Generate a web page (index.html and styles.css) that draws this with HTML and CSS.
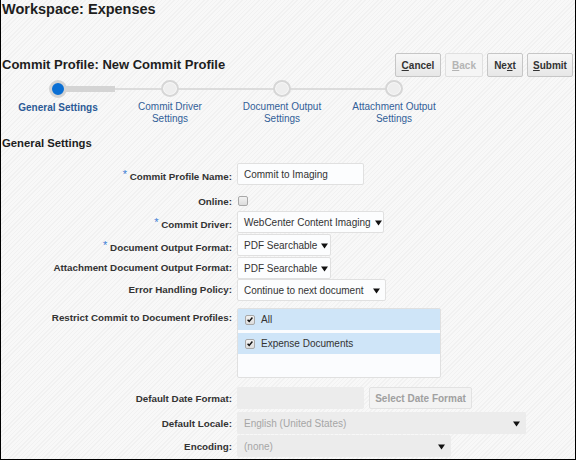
FILE: index.html
```html
<!DOCTYPE html>
<html>
<head>
<meta charset="utf-8">
<link rel="stylesheet" href="styles.css">
</head>
<body>
<div class="page">
  <h1 class="ws-title">Workspace: Expenses</h1>
  <div class="toolbar">
    <h2 class="profile-title">Commit Profile: New Commit Profile</h2>
    <div class="buttons">
      <button class="btn w-cancel"><u>C</u>ancel</button>
      <button class="btn w-back disabled"><u>B</u>ack</button>
      <button class="btn w-next">Ne<u>x</u>t</button>
      <button class="btn w-submit"><u>S</u>ubmit</button>
    </div>
  </div>

  <div class="train">
    <div class="step active"><span class="dot"></span><span class="step-label">General Settings</span></div>
    <div class="step"><span class="dot"></span><span class="step-label">Commit Driver<br>Settings</span></div>
    <div class="step"><span class="dot"></span><span class="step-label">Document Output<br>Settings</span></div>
    <div class="step"><span class="dot"></span><span class="step-label">Attachment Output<br>Settings</span></div>
  </div>

  <h3 class="section">General Settings</h3>

  <div class="form">
    <div class="row r-name">
      <div class="lbl"><span class="req">*</span> Commit Profile Name:</div>
      <div class="ctl"><div class="field w-name">Commit to Imaging</div></div>
    </div>
    <div class="row r-online">
      <div class="lbl">Online:</div>
      <div class="ctl"><span class="cb"></span></div>
    </div>
    <div class="row r-std">
      <div class="lbl"><span class="req">*</span> Commit Driver:</div>
      <div class="ctl"><div class="field select w-driver"><span class="val">WebCenter Content Imaging</span><svg class="arr" viewBox="0 0 7 7"><path d="M0 1.5h7L3.5 6.5z"/></svg></div></div>
    </div>
    <div class="row r-std">
      <div class="lbl"><span class="req">*</span> Document Output Format:</div>
      <div class="ctl"><div class="field select w-pdf"><span class="val">PDF Searchable</span><svg class="arr" viewBox="0 0 7 7"><path d="M0 1.5h7L3.5 6.5z"/></svg></div></div>
    </div>
    <div class="row r-att">
      <div class="lbl">Attachment Document Output Format:</div>
      <div class="ctl"><div class="field select w-pdf"><span class="val">PDF Searchable</span><svg class="arr" viewBox="0 0 7 7"><path d="M0 1.5h7L3.5 6.5z"/></svg></div></div>
    </div>
    <div class="row r-std">
      <div class="lbl">Error Handling Policy:</div>
      <div class="ctl"><div class="field select w-err"><span class="val">Continue to next document</span><svg class="arr" viewBox="0 0 7 7"><path d="M0 1.5h7L3.5 6.5z"/></svg></div></div>
    </div>
    <div class="row r-list">
      <div class="lbl lbl-top">Restrict Commit to Document Profiles:</div>
      <div class="ctl">
        <div class="list">
          <div class="item"><span class="cb checked"><svg viewBox="0 0 10 10"><path d="M2 5.2l2 2.3L8 2.5" fill="none" stroke="#111" stroke-width="1.8"/></svg></span>All</div>
          <div class="item"><span class="cb checked"><svg viewBox="0 0 10 10"><path d="M2 5.2l2 2.3L8 2.5" fill="none" stroke="#111" stroke-width="1.8"/></svg></span>Expense Documents</div>
        </div>
      </div>
    </div>
    <div class="row r-date">
      <div class="lbl">Default Date Format:</div>
      <div class="ctl"><div class="field dis w-name"></div><button class="btn dis-btn">Select Date Format</button></div>
    </div>
    <div class="row r-locale">
      <div class="lbl">Default Locale:</div>
      <div class="ctl"><div class="field select dis w-locale"><span class="val">English (United States)</span><svg class="arr" viewBox="0 0 7 7"><path d="M0 1.5h7L3.5 6.5z"/></svg></div></div>
    </div>
    <div class="row r-enc">
      <div class="lbl">Encoding:</div>
      <div class="ctl"><div class="field select dis w-enc"><span class="val">(none)</span><svg class="arr" viewBox="0 0 7 7"><path d="M0 1.5h7L3.5 6.5z"/></svg></div></div>
    </div>
  </div>
</div>
</body>
</html>
```

FILE: styles.css
```css
html, body {
  margin: 0;
  padding: 0;
}
body {
  width: 576px;
  height: 460px;
  box-sizing: border-box;
  border: 1px solid #000;
  border-top: 0;
  overflow: hidden;
  font-family: "Liberation Sans", Arial, sans-serif;
  color: #333;
  background-color: #f4f4f4;
  background-image: repeating-linear-gradient(135deg, #f1f1f1 0px, #f1f1f1 1px, #f8f8f8 1px, #f8f8f8 3px);
}
.page {
  position: relative;
}
.ws-title {
  margin: 0;
  padding-left: 1px;
  font-size: 14.5px;
  font-weight: bold;
  line-height: 18px;
  color: #1e1e1e;
}
.toolbar {
  display: flex;
  align-items: center;
  justify-content: space-between;
  margin-top: 35px;
  height: 24px;
  padding: 0 2px 0 1px;
}
.profile-title {
  margin: 0;
  font-size: 13px;
  font-weight: bold;
  color: #1e1e1e;
  line-height: 16px;
}
.buttons {
  display: flex;
  gap: 4px;
}
.btn {
  height: 24px;
  padding: 0;
  font-family: "Liberation Sans", Arial, sans-serif;
  font-size: 10px;
  font-weight: bold;
  color: #333;
  border: 1px solid #c6c6c6;
  border-radius: 2px;
  background: linear-gradient(#f7f7f7, #e7e7e7);
  box-sizing: border-box;
}
.w-cancel { width: 46px; }
.w-back { width: 38px; }
.w-next { width: 36px; }
.w-submit { width: 46px; }
.btn.disabled {
  color: #b4b4b4;
  background: #f5f5f5;
  border-color: #e0e0e0;
}
.train {
  position: relative;
  display: flex;
  margin-top: 3px;
  padding-left: 1px;
  height: 45px;
}
.train::before {
  content: "";
  position: absolute;
  left: 57px;
  width: 338px;
  top: 8px;
  height: 2px;
  background: #dcdcdc;
}
.train::after {
  content: "";
  position: absolute;
  left: 57px;
  width: 57px;
  top: 6px;
  height: 6px;
  background: #d4d4d4;
}
.step {
  width: 112px;
  display: flex;
  flex-direction: column;
  align-items: center;
  position: relative;
  z-index: 1;
}
.dot {
  width: 18px;
  height: 18px;
  box-sizing: border-box;
  border-radius: 50%;
  border: 2px solid #d6d6d6;
  background: #eeeeee;
  box-shadow: inset 0 0 0 1px #f8f8f8;
}
.step.active .dot {
  background: #0a6fd4;
  border: 3px solid #d4d4d4;
  box-shadow: none;
}
.step-label {
  margin-top: 4px;
  font-size: 10px;
  line-height: 12px;
  text-align: center;
  color: #325f98;
}
.step.active .step-label {
  font-weight: bold;
  color: #2b5a96;
}
.section {
  margin: 10px 0 0 0;
  padding-left: 1px;
  font-size: 11.3px;
  font-weight: bold;
  line-height: 16px;
  color: #1e1e1e;
}
.form {
  margin-top: 12px;
  display: flex;
  flex-direction: column;
}
.row {
  display: grid;
  grid-template-columns: 231px auto;
  column-gap: 5px;
  align-items: center;
}
.r-name { height: 23px; align-items: start; }
.r-name .lbl { line-height: 22px; }
.r-online { height: 25px; padding-top: 5px; box-sizing: border-box; }
.r-std { height: 23px; align-items: start; }
.r-std .lbl, .r-att .lbl { line-height: 22px; }
.r-att { height: 22px; align-items: start; }
.r-list { margin-top: 6px; align-items: start; }
.r-date { margin-top: 9px; height: 22px; }
.r-locale { margin-top: 3px; height: 22px; }
.r-enc { margin-top: 1px; height: 22px; }
.lbl {
  text-align: right;
  font-size: 9.8px;
  font-weight: bold;
  color: #333;
  white-space: nowrap;
}
.lbl-top {
  padding-top: 4px;
}
.req {
  color: #3c7ed6;
  font-weight: normal;
  font-size: 11px;
  vertical-align: 2px;
}
.ctl {
  display: flex;
  align-items: center;
  gap: 5px;
}
.field {
  height: 22px;
  box-sizing: border-box;
  border: 1px solid #e0e0e0;
  border-radius: 2px;
  background: #fcfdfe;
  font-size: 10px;
  color: #333;
  padding: 0 5px 0 6px;
  display: flex;
  align-items: center;
  white-space: nowrap;
}
.select {
  justify-content: space-between;
  gap: 4px;
}
.val {
  flex-shrink: 0;
}
.arr {
  width: 7px;
  height: 7px;
  fill: #111;
  flex-shrink: 0;
}
.w-name { width: 127px; }
.w-driver { width: 147px; }
.w-pdf { width: 94px; }
.w-err { width: 149px; }
.w-locale { width: 289px; }
.w-enc { width: 214px; }
.field.dis {
  background: #ececec;
  border-color: #ececec;
  color: #a6a6a6;
}
.dis-btn {
  width: 103px;
  height: 22px;
  color: #a0a0a0;
  background: #f3f3f3;
  border-color: #e2e2e2;
}
.cb {
  width: 10px;
  height: 10px;
  box-sizing: border-box;
  border: 1px solid #a8a8a8;
  border-radius: 2px;
  background: linear-gradient(#f2f2f2, #dcdcdc);
  display: inline-flex;
  align-items: center;
  justify-content: center;
  margin-left: 1px;
}
.cb svg {
  width: 9px;
  height: 9px;
}
.list {
  width: 204px;
  height: 70px;
  box-sizing: border-box;
  border: 1px solid #e0e0e0;
  border-radius: 2px;
  background: #fbfcfe;
  display: flex;
  flex-direction: column;
  gap: 3px;
}
.item {
  height: 21px;
  background: #cfe5f8;
  display: flex;
  align-items: center;
  gap: 6px;
  padding-left: 7px;
  font-size: 10px;
  color: #333;
}
.item .cb {
  margin-left: 0;
}
```
